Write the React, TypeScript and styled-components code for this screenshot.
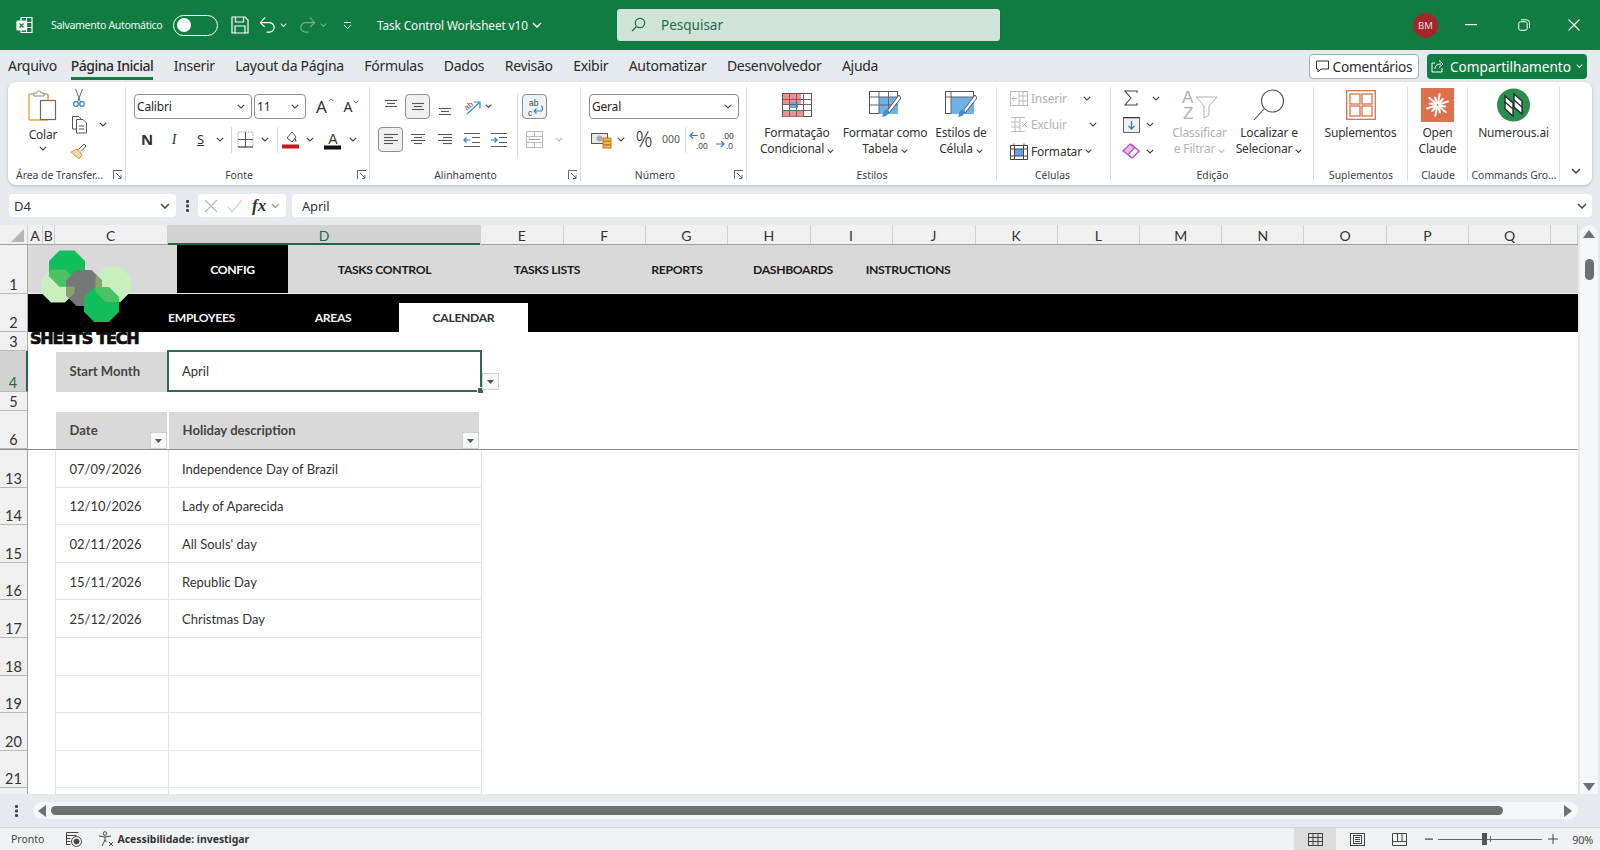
import React from "react";
import styled, { createGlobalStyle } from "styled-components";

const UI = `"Noto Sans", "Open Sans", sans-serif`;
const CELL = `Lato, "Noto Sans", sans-serif`;

const Global = createGlobalStyle`
  html, body { margin: 0; padding: 0; background: #e6e9ee; }
  * { box-sizing: border-box; }
`;

const Page = styled.div`
  width: 1600px; height: 850px; overflow: hidden; display: flex; flex-direction: column;
  background: #e6e9ee; font-family: ${UI}; color: #262626;
`;

/* ---------- title bar ---------- */
const TitleBar = styled.header`
  height: 50px; flex: none; background: #107c41; display: flex; align-items: center; color: #fff; position: relative;
`;
const TitleSlot = styled.div<{ $w: number; $ml?: number }>`
  width: ${p => p.$w}px; margin-left: ${p => p.$ml ?? 0}px; flex: none; display: flex; align-items: center; justify-content: center;
`;
const AutoSave = styled.span`
  font-size: 10.6px; margin-left: 17px; width: 122px; white-space: nowrap; letter-spacing: -0.35px; color: #eef6f1;
`;
const Toggle = styled.div`
  width: 45px; height: 21px; border: 1.4px solid #fff; border-radius: 11px; padding: 3px; flex: none; display: flex; align-items: center;
`;
const ToggleKnob = styled.div`
  width: 14px; height: 14px; border-radius: 50%; background: #fff;
`;
const DocTitle = styled.span`
  font-size: 11.8px; margin-left: 25px; width: 147px; white-space: nowrap; letter-spacing: -0.1px; color: #f3f9f6;
`;
const SearchBox = styled.div`
  width: 383px; height: 32px; margin-left: 75px; margin-top: -1px; background: #cfe3d8; border-radius: 3px; display: flex; align-items: center;
  padding-left: 14px; gap: 15px; font-size: 13.5px; color: #2a6a4a; flex: none; box-shadow: 0 0 1px rgba(0,0,0,.3);
`;
const Avatar = styled.div`
  width: 25px; height: 25px; margin-left: 413px; border-radius: 50%; background: #a4262c; color: #f1dcdc; font-size: 9.5px;
  display: flex; align-items: center; justify-content: center; flex: none;
`;

/* ---------- tabs ---------- */
const TabRow = styled.nav`
  height: 32px; flex: none; display: flex; align-items: center; padding: 0 13px 0 8px; gap: 20.5px; font-size: 14px;
`;
const Tab = styled.span<{ $active?: boolean }>`
  height: 26px; margin-top: 2px; line-height: 24px; white-space: nowrap; color: #2b2b2b; flex: none;
  letter-spacing: ${p => (p.$active ? "-0.5px" : "-0.3px")};
  margin-left: ${p => (p.$active ? "-6.5px" : "0")};
  border-bottom: 3px solid ${p => (p.$active ? "#107c41" : "transparent")};
  font-weight: ${p => (p.$active ? 500 : 400)};
`;
const TabActions = styled.div`
  margin-left: auto; display: flex; gap: 8px; align-items: center;
`;
const CommentBtn = styled.button`
  width: 110px; height: 25px; background: #fff; border: 1px solid #a9acb0; border-radius: 4px; font: 13.6px ${UI}; color: #2b2b2b;
  display: flex; align-items: center; justify-content: center; gap: 4px; padding: 0; letter-spacing: -0.2px;
`;
const ShareBtn = styled.button`
  width: 160px; height: 25px; background: #107c41; border: none; border-radius: 4px; font: 13.6px ${UI}; color: #fff;
  display: flex; align-items: center; justify-content: center; gap: 5px; padding: 0; letter-spacing: 0;
`;

/* ---------- ribbon ---------- */
const Ribbon = styled.section`
  height: 103px; flex: none; margin: 0 8px; background: #fff; border-radius: 8px; display: flex; box-shadow: 0 1px 3px rgba(0,0,0,.22);
`;
const Group = styled.div<{ $w: number }>`
  width: ${p => p.$w}px; flex: none; display: flex; flex-direction: column; position: relative;
  &::after { content: ""; position: absolute; right: 0; top: 5px; bottom: 4px; width: 1px; background: #dcdcdc; }
`;
const GroupBody = styled.div<{ $pt?: number; $pl?: number }>`
  flex: 1; display: flex; padding: ${p => p.$pt ?? 0}px 0 0 ${p => p.$pl ?? 0}px; min-height: 0;
`;
const GroupFoot = styled.div<{ $pr?: number; $pl?: number }>`
  height: 19px; flex: none; font-size: 10.4px; color: #3c3c3c; display: flex; align-items: center;
  justify-content: ${p => (p.$pl ? "flex-start" : "center")};
  padding-right: ${p => p.$pr ?? 0}px; padding-left: ${p => p.$pl ?? 0}px;
  position: relative; white-space: nowrap; margin-bottom: 0; padding-bottom: 1px;
`;
const Launcher = styled.span<{ $r: number }>`
  position: absolute; right: ${p => p.$r}px; top: 4px; display: flex;
`;
const Column = styled.div<{ $w?: number; $ml?: number }>`
  display: flex; flex-direction: column; flex: none;
  ${p => p.$w && `width:${p.$w}px;`} margin-left: ${p => p.$ml ?? 0}px;
`;
const ToolRow = styled.div<{ $mt?: number; $gap?: number }>`
  height: 25px; display: flex; align-items: center; margin-top: ${p => p.$mt ?? 0}px; gap: ${p => p.$gap ?? 0}px;
`;
const Slot = styled.div<{ $w: number; $boxed?: boolean; $tint?: boolean; $ml?: number }>`
  width: ${p => p.$w}px; height: 25px; flex: none; display: flex; align-items: center; justify-content: center; margin-left: ${p => p.$ml ?? 0}px;
  ${p => p.$boxed && `background:${p.$tint ? "#eef3f7" : "#f0f0f0"};border:1px solid #8e8e8e;border-radius:4px;`}
`;
const Combo = styled.div<{ $w: number; $ml?: number }>`
  width: ${p => p.$w}px; margin-left: ${p => p.$ml ?? 0}px; height: 25px; flex: none; border: 1px solid #8f8f8f; border-radius: 4px; font: 12px ${UI}; letter-spacing: -0.2px;
  display: flex; align-items: center; justify-content: space-between; padding: 0 6px 0 2px;
`;
const RowSep = styled.div`
  width: 1px; height: 26px; background: #d8d8d8; flex: none;
`;
const TallSep = styled.div`
  width: 1px; height: 64px; background: #d8d8d8; flex: none; margin-left: 0;
`;
const GlyphBtn = styled.span<{ $size?: number; $weight?: number; $italic?: boolean; $underline?: boolean; $color?: string; $family?: string }>`
  font: ${p => (p.$italic ? "italic" : "normal")} ${p => p.$weight ?? 400} ${p => p.$size ?? 14}px ${p => p.$family ?? UI};
  color: ${p => p.$color ?? "#333"}; text-decoration: ${p => (p.$underline ? "underline" : "none")}; line-height: 1; white-space: nowrap;
`;
const SizeBtn = styled.span<{ $size: number }>`
  display: inline-flex; align-items: flex-start; gap: 1px; font: ${p => p.$size}px ${UI}; color: #333; line-height: 1;
`;
const BigBtn = styled.div<{ $w: number; $dim?: boolean; $ml?: number }>`
  width: ${p => p.$w}px; flex: none; margin-left: ${p => p.$ml ?? 0}px; display: flex; flex-direction: column; align-items: center; padding-top: 6px;
  font-size: 12px; line-height: 16px; letter-spacing: -0.18px; color: ${p => (p.$dim ? "#b0b0b0" : "#333")}; text-align: center; white-space: nowrap;
`;
const BigIcon = styled.div`
  height: 34px; margin-bottom: 3px; display: flex; align-items: center; justify-content: center;
`;
const PasteLabel = styled.span`
  margin-top: 2px; margin-bottom: 3px;
`;
const SmallStack = styled.div<{ $w: number; $ml?: number }>`
  width: ${p => p.$w}px; flex: none; margin-left: ${p => p.$ml ?? 0}px; padding-top: 3px; display: flex; flex-direction: column;
`;
const SmallRow = styled.div<{ $dim?: boolean }>`
  height: 26.5px; display: flex; align-items: center; font-size: 12px; letter-spacing: -0.18px; color: ${p => (p.$dim ? "#b0b0b0" : "#333")}; white-space: nowrap;
`;
const SmallIcon = styled.span<{ $w?: number }>`
  width: ${p => p.$w ?? 18}px; flex: none; display: flex; justify-content: center; align-items: center;
`;
const SmallChev = styled.span<{ $ml: number }>`
  margin-left: ${p => p.$ml}px; display: flex; flex: none;
`;
const Collapse = styled.div`
  flex: 1; display: flex; align-items: flex-end; justify-content: center; padding-bottom: 11px;
`;

/* ---------- formula bar ---------- */
const FormulaBar = styled.div`
  height: 23px; flex: none; margin: 9px 8px 8px 9px; display: flex; align-items: stretch; font-size: 13px;
`;
const NameBox = styled.div`
  width: 167px; background: #fff; border-radius: 4px; display: flex; align-items: center; justify-content: space-between; padding: 0 6px 0 5px; color: #333;
`;
const Dots = styled.div`
  width: 22px; display: flex; align-items: center; justify-content: center;
`;
const FxBox = styled.div`
  width: 88px; background: #fff; border-radius: 4px; display: flex; align-items: center; padding-left: 6px; gap: 9px;
`;
const FxText = styled.span`
  font: italic 600 17px "Liberation Serif", serif; color: #333; margin-right: -4px;
`;
const FormulaInput = styled.div`
  flex: 1; margin-left: 6px; background: #fff; border-radius: 4px; display: flex; align-items: center; justify-content: space-between; padding: 0 5px 0 10px; color: #333; letter-spacing: -0.2px;
`;

/* ---------- sheet ---------- */
const Main = styled.div`
  flex: 1; min-height: 0; display: flex;
`;
const Sheet = styled.div`
  width: 1578px; flex: none; background: #fff; overflow: hidden; position: relative; display: flex; flex-direction: column;
`;
const ColHeaders = styled.div`
  height: 20px; flex: none; display: flex; background: #f0f0f0; border-bottom: 1px solid #9f9f9f;
`;
const Corner = styled.div`
  width: 28px; flex: none; display: flex; align-items: flex-end; justify-content: flex-end; padding: 0 3px 2px 0; border-right: 1px solid #d0d0d0;
`;
const ColHead = styled.div<{ $w: number; $on?: boolean }>`
  width: ${p => p.$w}px; flex: ${p => (p.$w ? "none" : 1)}; font: 14px ${CELL}; display: flex; align-items: center; justify-content: center;
  border-right: 1px solid #cfcfcf; padding-top: 1px;
  color: ${p => (p.$on ? "#1e6b43" : "#333")}; background: ${p => (p.$on ? "#d2d2d2" : "transparent")};
  ${p => p.$on && "box-shadow: inset 0 -2px 0 #1e6b43; height: 20px;"}
`;
const Row = styled.div<{ $h: number; $line?: boolean }>`
  height: ${p => p.$h}px; flex: none; display: flex; ${p => p.$line && "border-bottom: 1px solid #8d8d8d;"}
`;
const RowHead = styled.div<{ $on?: boolean }>`
  width: 28px; flex: none; font: 14.5px ${CELL}; display: flex; align-items: flex-end; justify-content: center; line-height: 16px;
  background: ${p => (p.$on ? "#d2d2d2" : "#f0f0f0")}; color: ${p => (p.$on ? "#1e6b43" : "#333")};
  border-bottom: 1px solid #b9b9b9; border-right: ${p => (p.$on ? "2px solid #1e6b43" : "1px solid #a8a8a8")};
`;
const NavBar = styled.div`
  flex: 1; background: #d9d9d9; padding-left: 149px; display: flex; border-bottom: 1px solid #efefef;
`;
const NavTab = styled.div<{ $w: number; $on?: boolean }>`
  width: ${p => p.$w}px; flex: none; display: flex; align-items: center; justify-content: center; padding-top: 2px;
  font: 700 12.2px ${CELL}; letter-spacing: -0.35px; color: ${p => (p.$on ? "#fff" : "#1c1c1c")}; background: ${p => (p.$on ? "#000" : "transparent")}; white-space: nowrap;
`;
const SubBar = styled.div`
  flex: 1; background: #000; padding-left: 108px; display: flex; align-items: flex-end;
`;
const SubTab = styled.div<{ $w: number; $on?: boolean }>`
  width: ${p => p.$w}px; height: 29px; flex: none; display: flex; align-items: center; justify-content: center; padding-bottom: 1px;
  font: 700 12.2px ${CELL}; letter-spacing: -0.35px; color: ${p => (p.$on ? "#333" : "#f2f2f2")}; background: ${p => (p.$on ? "#fff" : "transparent")};
`;
const LogoMark = styled.svg`
  position: absolute; left: 38px; top: 23px; width: 96px; height: 76px; z-index: 2;
`;
const Brand = styled.div`
  position: relative; z-index: 2; margin: -1px 0 0 2px; font: 900 16px "DejaVu Sans", sans-serif; color: #0c0c0c; letter-spacing: -1.2px; -webkit-text-stroke: 0.7px #0c0c0c; line-height: 15px; white-space: nowrap;
`;
const SheetBody = styled.div<{ $pl?: number }>`
  flex: 1; display: flex; padding-left: ${p => p.$pl ?? 0}px;
`;
const LabelCell = styled.div<{ $w: number; $ml?: number }>`
  width: ${p => p.$w}px; margin-left: ${p => p.$ml ?? 0}px; flex: none; background: #d9d9d9; display: flex; align-items: center; padding: 0 0 2px 13.5px;
  font: 700 13.1px ${CELL}; color: #454545; position: relative; margin-top: 1px;
`;
const ActiveCell = styled.div`
  width: 315px; flex: none; margin-left: 0; border: 2px solid #2c6b50; display: flex; align-items: center; padding: 0 0 1px 13px;
  font: 13px ${CELL}; color: #333; position: relative; margin-top: -1px; height: 42px;
`;
const FillHandle = styled.span`
  position: absolute; right: -3px; bottom: -3px; width: 5px; height: 5px; background: #2c6b50; border: 1px solid #fff; box-sizing: content-box; margin: -1px;
`;
const DropBtn = styled.div<{ $right: number; $bottom: number }>`
  position: absolute; right: ${p => p.$right}px; bottom: ${p => p.$bottom}px; width: 17px; height: 17px; background: #f6f8f9; border: 1px solid #cfcfcf; display: flex; align-items: center; justify-content: center;
`;
const DataCell = styled.div<{ $w: number; $pl: number }>`
  width: ${p => p.$w}px; flex: none; display: flex; align-items: center; padding: 1px 0 0 ${p => p.$pl}px; font: 13px ${CELL}; color: #333;
  border-left: 1px solid #e4e4e4; border-bottom: 1.5px solid #e4e4e4;
`;
const RowEnd = styled.div`
  width: 1px; background: #e4e4e4; flex: none;
`;

/* ---------- scrollbars ---------- */
const VScroll = styled.div`
  width: 18px; margin-left: 2px; flex: none; background: #f5f6f7; border-radius: 9px 9px 0 0; display: flex; flex-direction: column; align-items: center; padding-top: 5px;
`;
const VThumb = styled.div`
  width: 9px; height: 21px; margin-top: 21px; border-radius: 5px; background: #6f6f6f;
`;
const VDown = styled.div`
  margin-top: auto; padding-bottom: 3px; display: flex;
`;
const HScrollRow = styled.div`
  height: 33px; flex: none; display: flex; align-items: flex-start; padding-top: 8px;
`;
const HDots = styled.div`
  width: 33px; flex: none; height: 17px; display: flex; align-items: center; justify-content: center;
`;
const HPill = styled.div`
  width: 1545px; height: 17px; background: #f5f6f7; border-radius: 9px; display: flex; align-items: center; padding: 0 6px 0 5px;
`;
const HThumb = styled.div`
  width: 1452px; height: 9px; margin-left: 5px; background: #6f6f6f; border-radius: 5px;
`;
const HEnd = styled.span`
  margin-left: auto; display: flex;
`;

/* ---------- status bar ---------- */
const StatusBar = styled.footer`
  height: 23px; flex: none; background: #f0f1f2; border-top: 1px solid #d3d3d3; display: flex; align-items: center; padding-left: 11px; font-size: 10.5px; color: #444;
`;
const StatusIcon = styled.span<{ $ml: number }>`
  margin-left: ${p => p.$ml}px; display: flex; flex: none;
`;
const A11y = styled.span`
  font-weight: 700; margin-left: 3px; letter-spacing: -0.05px; color: #333;
`;
const ViewBtn = styled.div<{ $on?: boolean; $ml?: number }>`
  width: 42px; height: 22px; display: flex; align-items: center; justify-content: center; flex: none; margin-left: ${p => p.$ml ?? 0}px;
  background: ${p => (p.$on ? "#dcdcdc" : "transparent")};
`;
const Zoom = styled.div`
  display: flex; align-items: center; margin-left: 5px; flex: none;
`;
const ZoomTrack = styled.div`
  width: 104px; height: 1px; background: #666; margin: 0 6px 0 5px; position: relative;
`;
const ZoomKnob = styled.span`
  position: absolute; left: 44px; top: -6px; width: 5px; height: 12px; background: #555;
`;
const ZoomTick = styled.span`
  position: absolute; left: 52px; top: -3px; width: 1px; height: 6px; background: #666;
`;
const ZoomPct = styled.span`
  margin-left: 14px; font-size: 10.8px; color: #444; letter-spacing: -0.1px;
`;

/* ---------- icons ---------- */
const Chev = ({ c = "#444", w = 8 }: { c?: string; w?: number }) => (
  <svg width={w} height={w * 0.6} viewBox="0 0 10 6"><path d="M1 1l4 4 4-4" fill="none" stroke={c} strokeWidth="1.5" /></svg>
);
const ChevUp = () => (
  <svg width="6" height="4" viewBox="0 0 10 6"><path d="M1 5l4-4 4 4" fill="none" stroke="#555" strokeWidth="1.500" /></svg>
);
const LaunchIcon = () => (
  <svg width="10" height="10" viewBox="0 0 10 10" fill="none" stroke="#666"><path d="M.5 9V.5H9" /><path d="M3 3l5 5M8 5v3.500H5" /></svg>
);
const ExcelIcon = () => (
  <svg width="18" height="18" viewBox="0 0 18 18" fill="none" stroke="#fff" strokeWidth="1.2"><path d="M5 1.500h11v15H5zM10.500 1.500v15M5 6.500h11M5 11.500h11" /><rect x="1" y="5" width="9" height="9" rx="1" fill="#fff" /><path d="M3.500 7.500l4 4M7.500 7.500l-4 4" stroke="#107c41" /></svg>
);
const SaveIcon = () => (
  <svg width="18" height="18" viewBox="0 0 18 18" fill="none" stroke="#fff" strokeWidth="1.2"><path d="M1 1h13l3 3v13H1z" /><path d="M4.500 1v5h8V1M4 17v-7h10v7" /></svg>
);
const UndoIcon = () => (
  <svg width="18" height="18" viewBox="0 0 18 18" fill="none" stroke="#fff" strokeWidth="1.3"><path d="M1.500 6.500h9a5 5 0 0 1 1 10H8" /><path d="M6.500 1L1.500 6.500l4.500 4.500" /></svg>
);
const RedoIcon = () => (
  <svg width="18" height="18" viewBox="0 0 18 18" fill="none" stroke="#6fb08c" strokeWidth="1.3"><path d="M16.500 6.500h-9a5 5 0 0 0-1 10H10" /><path d="M11.500 1l5 5.500-4.500 4.500" /></svg>
);
const CustomIcon = () => (
  <svg width="9" height="9" viewBox="0 0 9 9" fill="none" stroke="#fff"><path d="M1 1.500h7" /><path d="M1 4l3.500 3.500L8 4" /></svg>
);
const SearchIcon = () => (
  <svg width="15" height="15" viewBox="0 0 15 15" fill="none" stroke="#2a6a4a" strokeWidth="1.2"><circle cx="9" cy="6" r="4.700" /><path d="M5.500 9.500L1 14" /></svg>
);
const CommentIcon = () => (
  <svg width="13" height="13" viewBox="0 0 13 13" fill="none" stroke="#333"><path d="M.5 1h12v8H5l-3 3V9H.5z" /></svg>
);
const ShareIcon = () => (
  <svg width="14" height="14" viewBox="0 0 14 14" fill="none" stroke="#fff"><path d="M4 4H1v9h10V9" /><path d="M4 10c0-4 3-5 6-5M8 1.500L12 5 8 8.500" /></svg>
);
const PasteIcon = () => (
  <svg width="30" height="32" viewBox="0 0 30 32" fill="none"><rect x="1" y="5" width="19" height="26" rx="1" stroke="#e4a252" strokeWidth="1.5" /><path d="M6 6V4h3a2 2 0 0 1 4 0h3v3H6z" fill="#fff" stroke="#8a8a8a" /><rect x="12.500" y="11.500" width="15" height="19" fill="#fff" stroke="#6a6a6a" strokeWidth="1.2" /></svg>
);
const ScissorsIcon = () => (
  <svg width="14" height="20" viewBox="0 0 14 20" fill="none"><path d="M3.500 1l5 13M10.500 1l-5 13" stroke="#666" /><circle cx="4" cy="16" r="2.300" stroke="#2f7dbd" strokeWidth="1.200" /><circle cx="10" cy="16" r="2.300" stroke="#2f7dbd" strokeWidth="1.200" /></svg>
);
const CopyIcon = () => (
  <svg width="17" height="19" viewBox="0 0 17 19" fill="none" stroke="#555"><path d="M6 14H1.500V1.500H8L10 4" /><path d="M5.500 4.500H12l3.500 3.500v10h-10z" fill="#fff" /><path d="M8 11h5M8 14h5" /></svg>
);
const BrushIcon = () => (
  <svg width="18" height="18" viewBox="0 0 18 18" fill="none"><path d="M1 10l6-3 5 6-3 4z" fill="#f3d9a8" stroke="#d9963d" /><path d="M8.500 7.500L14 2l2 2-5 5.500" stroke="#555" fill="#fff" /></svg>
);
const BordersIcon = () => (
  <svg width="17" height="17" viewBox="0 0 17 17" fill="none"><path d="M1 1h15v15H1z" stroke="#aaa" strokeDasharray="1.500 1" /><path d="M8.500 1v15M1 8.500h15" stroke="#555" /><path d="M1 16h15" stroke="#333" /></svg>
);
const FillIcon = () => (
  <svg width="18" height="19" viewBox="0 0 18 19" fill="none"><path d="M5 8l5-6 4 5-4 5z" fill="#fff" stroke="#555" /><path d="M13 8c1.500 1.500 2 3 1 3.500s-1.500-1.500-1-3.500z" fill="#555" /><rect x="0" y="14.500" width="17" height="4" fill="#c5191f" /></svg>
);
const Lines = ({ rows, c = "#555" }: { rows: [number, number, number][]; c?: string }) => (
  <svg width="18" height="18" viewBox="0 0 18 18" fill="none" stroke={c} strokeWidth="1.1">
    {rows.map((r, i) => <path key={i} d={`M${r[0]} ${r[2]}.5H${r[1]}`} />)}
  </svg>
);
const OrientIcon = () => (
  <svg width="20" height="19" viewBox="0 0 20 19" fill="none"><text x="2" y="12" fontSize="8" fill="#555" fontFamily="Liberation Sans" transform="rotate(-40 6 9)">ab</text><path d="M5 17L17 6M12 5h6v6" stroke="#2f87c9" strokeWidth="1.200" /></svg>
);
const IndentIcon = ({ inc }: { inc?: boolean }) => (
  <svg width="18" height="16" viewBox="0 0 18 16" fill="none" stroke="#555"><path d="M1 1.500h16M1 14.500h16M9 5.500h8M9 10.500h8" /><path d={inc ? "M1 8h6M4.500 5.500L7 8l-2.500 2.500" : "M7 8H1M3.500 5.500L1 8l2.500 2.500"} stroke="#2f7dbd" strokeWidth="1.200" /></svg>
);
const WrapIcon = () => (
  <svg width="20" height="20" viewBox="0 0 20 20" fill="none"><text x="4" y="8.500" fontSize="8.500" fill="#444" fontFamily="Liberation Sans">ab</text><text x="3" y="18.500" fontSize="8.500" fill="#444" fontFamily="Liberation Sans">c</text><path d="M9 14h7c2 0 2-5 0-5M9 14l2.500-2.500M9 14l2.500 2.500" stroke="#2f87c9" strokeWidth="1.200" /></svg>
);
const MergeIcon = () => (
  <svg width="17" height="17" viewBox="0 0 17 17" fill="none" stroke="#bbb"><rect x=".5" y=".5" width="16" height="16" /><path d="M.5 5.500h16M.5 11.500h16M8.500 .5v5M8.500 11.500v5" /><path d="M3 8.500h11" stroke="#999" /></svg>
);
const CurrencyIcon = () => (
  <svg width="22" height="18" viewBox="0 0 22 18" fill="none"><rect x=".5" y="2.500" width="16" height="10" fill="#e8e8e8" stroke="#555" /><circle cx="8.500" cy="7.500" r="3" fill="#aaa" /><rect x="12" y="7" width="8" height="3" fill="#f2b84b" stroke="#c67c1b" /><rect x="12" y="10.500" width="8" height="3" fill="#f2b84b" stroke="#c67c1b" /><rect x="12" y="14" width="8" height="3" fill="#f2b84b" stroke="#c67c1b" /></svg>
);
const DecIcon = ({ inc }: { inc?: boolean }) => (
  <svg width="24" height="20" viewBox="0 0 24 20" fill="none">
    <text x={inc ? 12 : 8} y="8.500" fontSize="8.500" fontFamily="Liberation Sans" fill="#444">{inc ? "0" : ".00"}</text>
    <text x={inc ? 8 : 12} y="18.500" fontSize="8.500" fontFamily="Liberation Sans" fill="#444">{inc ? ".00" : ".0"}</text>
    <path d={inc ? "M10 5.500H2M5 2.500L2 5.500l3 3" : "M2 14h8M7 11l3 3-3 3"} stroke="#2f7dbd" strokeWidth="1.200" />
  </svg>
);
const CondIcon = () => (
  <svg width="30" height="24" viewBox="0 0 30 24"><rect x=".5" y=".5" width="29" height="23" fill="#fff" stroke="#555" /><rect x="1" y="1" width="18" height="5.500" fill="#f08d93" /><rect x="7" y="6.500" width="12" height="5" fill="#f08d93" /><rect x="1" y="6.500" width="6" height="5" fill="#f08d93" /><rect x="7" y="9" width="9" height="6" fill="#6aa9e0" /><rect x="1" y="17" width="20" height="6.500" fill="#f08d93" /><path d="M7.500 0v24M14.500 0v24M21.500 0v24M0 6.500h30M0 11.500h30M0 17.500h30" stroke="#666" fill="none" /></svg>
);
const TableIcon = () => (
  <svg width="32" height="28" viewBox="0 0 32 28" fill="none"><rect x=".5" y=".5" width="28" height="22" fill="#fff" stroke="#555" /><rect x="10" y="6" width="19" height="17" fill="#6fb0e6" /><path d="M.5 6h28M.5 14h28M10 .5v22M19.500 .5v22" stroke="#666" /><path d="M30 4L18 20l2 2L32 7z" fill="#fff" stroke="#555" /><path d="M14 22c1-4 5-4 6-2 0 3-3 6-8 6 2-1 2-2 2-4z" fill="#3f8fd2" /></svg>
);
const CellStyleIcon = () => (
  <svg width="32" height="28" viewBox="0 0 32 28" fill="none"><rect x=".5" y=".5" width="28" height="22" fill="#fff" stroke="#555" /><rect x="6" y="6" width="23" height="17" fill="#6fb0e6" /><path d="M.5 6h28M6 .5v22" stroke="#666" /><path d="M30 4L18 20l2 2L32 7z" fill="#fff" stroke="#555" /><path d="M14 22c1-4 5-4 6-2 0 3-3 6-8 6 2-1 2-2 2-4z" fill="#3f8fd2" /></svg>
);
const CellsInsertIcon = () => (
  <svg width="18" height="15" viewBox="0 0 18 15" fill="none" stroke="#bbb"><rect x=".5" y=".5" width="17" height="14" /><path d="M9 .5v14M13 .5v14M9 5h9M9 10h9" /><path d="M7 7.500H2M4 5L2 7.500 4 10" /></svg>
);
const CellsDeleteIcon = () => (
  <svg width="18" height="15" viewBox="0 0 18 15" fill="none" stroke="#bbb"><path d="M1 .5h14M1 14.500h14M5 .5v14M10 .5v14M1 5h9M1 10h9" /><path d="M12 5l5 5M17 5l-5 5" /></svg>
);
const CellsFormatIcon = () => (
  <svg width="18" height="17" viewBox="0 0 18 17" fill="none" stroke="#444"><rect x=".5" y="2.500" width="17" height="14" fill="#fff" /><rect x="4" y="6" width="10" height="7" fill="#62a5e0" stroke="none" /><path d="M4.500 2.500v14M13.500 2.500v14M.5 6h17M.5 13h17M4 .5v2M14 .5v2" /></svg>
);
const SigmaIcon = () => (
  <svg width="16" height="16" viewBox="0 0 16 16" fill="none" stroke="#444" strokeWidth="1.100"><path d="M14 3V1H2l6 7-6 7h12v-2" /></svg>
);
const FillDownIcon = () => (
  <svg width="17" height="16" viewBox="0 0 17 16" fill="none"><rect x=".5" y=".5" width="16" height="15" fill="#f0f0f0" stroke="#666" /><path d="M.5 .5h16" stroke="#333" strokeWidth="1.500" /><path d="M8.500 4v8M5.500 9l3 3 3-3" stroke="#2f7dbd" strokeWidth="1.300" /></svg>
);
const EraserIcon = () => (
  <svg width="18" height="16" viewBox="0 0 18 16" fill="none" stroke="#b650bf" strokeWidth="1.200"><path d="M1 8l7-7 9 7-7 7z" fill="#e7b9ea" /><path d="M9 1l8 7-7 7-4-3.500 7-7z" fill="#fff" /></svg>
);
const SortIcon = () => (
  <svg width="36" height="34" viewBox="0 0 36 34" fill="none"><text x="0" y="15" fontSize="17" fontFamily="Liberation Sans" fill="#b0b0b0">A</text><text x="1" y="31" fontSize="17" fontFamily="Liberation Sans" fill="#b0b0b0">Z</text><path d="M14 9h21l-8 9v9l-5 3V18z" stroke="#b0b0b0" fill="none" /></svg>
);
const FindIcon = () => (
  <svg width="32" height="32" viewBox="0 0 32 32" fill="none" stroke="#555" strokeWidth="1.100"><circle cx="19.500" cy="12" r="11" /><path d="M11 20L1 31" /></svg>
);
const AddinIcon = () => (
  <svg width="30" height="30" viewBox="0 0 30 30" fill="none" stroke="#d0734f" strokeWidth="1.300"><rect x=".7" y=".7" width="28.600" height="28.600" /><rect x="4" y="4" width="10" height="10" /><rect x="16" y="4" width="10" height="10" /><rect x="4" y="16" width="10" height="10" /><rect x="16" y="16" width="10" height="10" /></svg>
);
const ClaudeIcon = () => (
  <svg width="33" height="34" viewBox="0 0 33 34"><rect width="33" height="34" fill="#de6f4d" /><g stroke="#fff" strokeWidth="2" strokeLinecap="round">{Array.from({ length: 12 }).map((_, i) => { const a = (i * Math.PI) / 6 + 0.2; const r = i % 2 ? 11 : 8; return <line key={i} x1={16.5 + 2 * Math.cos(a)} y1={17 + 2 * Math.sin(a)} x2={16.5 + r * Math.cos(a)} y2={17 + r * Math.sin(a)} />; })}</g></svg>
);
const NumerousIcon = () => (
  <svg width="33" height="34" viewBox="0 0 33 34"><circle cx="16.500" cy="17" r="16.500" fill="#2a8c4e" /><g fill="#fff" stroke="#1d2b22" strokeWidth="1.300"><path d="M8 8l8 7v13l-8-7z" /><path d="M17 6l8 7v13l-8-7z" /><path d="M8 14l8 7M17 12l8 7" fill="none" /></g></svg>
);
const XIcon = () => (
  <svg width="14" height="14" viewBox="0 0 14 14" fill="none" stroke="#b5b5b5" strokeWidth="1.100"><path d="M1 1l12 12M13 1L1 13" /></svg>
);
const CheckIcon = () => (
  <svg width="16" height="14" viewBox="0 0 16 14" fill="none" stroke="#c2c2c2" strokeWidth="1.100"><path d="M1 8l4 5L15 1" /></svg>
);
const VDots = ({ c = "#444" }: { c?: string }) => (
  <svg width="3" height="12" viewBox="0 0 3 12" fill={c}><rect width="3" height="3" rx="1" /><rect y="4.500" width="3" height="3" rx="1" /><rect y="9" width="3" height="3" rx="1" /></svg>
);
const Tri = ({ dir, c = "#6f6f6f" }: { dir: "u" | "d" | "l" | "r"; c?: string }) => {
  const d = { u: "M0 8L6 0l6 8z", d: "M0 0l6 8 6-8z", l: "M8 0v12L0 6z", r: "M0 0v12l8-6z" }[dir];
  const s = dir === "u" || dir === "d" ? [12, 8] : [8, 12];
  return <svg width={s[0]} height={s[1]} viewBox={`0 0 ${s[0]} ${s[1]}`} fill={c}><path d={d} /></svg>;
};
const FilterArrow = () => (
  <svg width="7" height="4" viewBox="0 0 7 4" fill="#555"><path d="M0 0h7L3.500 4z" /></svg>
);
const MacroIcon = () => (
  <svg width="16" height="15" viewBox="0 0 16 15" fill="none" stroke="#444"><path d="M.5.5h12M.5 3.500h10M.5 6.500h4M.5 9.500h4M.5.5v12h4" /><circle cx="10.500" cy="9.500" r="5" /><circle cx="10.500" cy="9.500" r="2.500" fill="#444" /></svg>
);
const A11yIcon = () => (
  <svg width="16" height="16" viewBox="0 0 16 16" fill="none" stroke="#444"><circle cx="7" cy="2.500" r="1.800" /><path d="M1 5l6 1 6-1M7 6v3L4 15M7 9l1.500 2M11 11l4 4M15 11l-4 4" /></svg>
);
const GridView = () => (
  <svg width="15" height="13" viewBox="0 0 15 13" fill="none" stroke="#444"><rect x=".5" y=".5" width="14" height="12" /><path d="M5 .5v12M10 .5v12M.5 4.500h14M.5 8.500h14" /></svg>
);
const PageView = () => (
  <svg width="15" height="13" viewBox="0 0 15 13" fill="none" stroke="#444"><rect x=".5" y=".5" width="14" height="12" /><rect x="3.500" y="2.500" width="8" height="8" /><path d="M5 4.500h5M5 6.500h5M5 8.500h5" /></svg>
);
const BreakView = () => (
  <svg width="15" height="13" viewBox="0 0 15 13" fill="none" stroke="#444"><path d="M.5.5h14v12H.5zM.5 8.500h14M5.500.5v8M10 .5v8" /></svg>
);

const octa = (cx: number, cy: number, r: number) => {
  const pts: string[] = [];
  for (let i = 0; i < 8; i++) {
    const a = Math.PI / 8 + (i * Math.PI) / 4;
    pts.push(`${(cx + r * Math.cos(a)).toFixed(1)},${(cy + r * Math.sin(a)).toFixed(1)}`);
  }
  return pts.join(" ");
};
const Logo = () => {
  const tl = octa(67, 268.5, 19.5);
  const br = octa(101.5, 304.5, 19);
  const ll = octa(58, 286, 18);
  const lr = octa(113, 284.5, 19);
  const gr = octa(84, 288, 19.5);
  return (
    <LogoMark viewBox="38 248 96 76">
      <defs>
        <clipPath id="cTl"><polygon points={tl} /></clipPath>
        <clipPath id="cBr"><polygon points={br} /></clipPath>
        <clipPath id="cGr"><polygon points={gr} /></clipPath>
      </defs>
      <polygon points={ll} fill="#c8efbd" />
      <polygon points={lr} fill="#c8efbd" />
      <polygon points={gr} fill="#777777" />
      <polygon points={ll} fill="#87a565" clipPath="url(#cGr)" />
      <polygon points={lr} fill="#87a565" clipPath="url(#cGr)" />
      <polygon points={tl} fill="#12bd5b" />
      <polygon points={ll} fill="#4cc264" clipPath="url(#cTl)" />
      <polygon points={gr} fill="#777777" clipPath="url(#cTl)" />
      <polygon points={br} fill="#12bd5b" />
      <polygon points={lr} fill="#4cc264" clipPath="url(#cBr)" />
    </LogoMark>
  );
};

const COLS: [string, number][] = [
  ["A", 15], ["B", 11.5], ["C", 113.5], ["D", 313], ["E", 82.6], ["F", 82], ["G", 82.4], ["H", 82.6], ["I", 82], ["J", 83],
  ["K", 82], ["L", 82.4], ["M", 82.4], ["N", 82], ["O", 82.4], ["P", 82.4], ["Q", 82], ["", 0],
];
const DATA = [
  ["13", "07/09/2026", "Independence Day of Brazil"],
  ["14", "12/10/2026", "Lady of Aparecida"],
  ["15", "02/11/2026", "All Souls' day"],
  ["16", "15/11/2026", "Republic Day"],
  ["17", "25/12/2026", "Christmas Day"],
  ["18", "", ""], ["19", "", ""], ["20", "", ""], ["21", "", ""], ["", "", ""],
];

export default function App() {
  return (
    <Page>
      <Global />
      <TitleBar>
        <TitleSlot $w={18} $ml={16}><ExcelIcon /></TitleSlot>
        <AutoSave>Salvamento Automático</AutoSave>
        <Toggle><ToggleKnob /></Toggle>
        <TitleSlot $w={18} $ml={13}><SaveIcon /></TitleSlot>
        <TitleSlot $w={17} $ml={10}><UndoIcon /></TitleSlot>
        <TitleSlot $w={9} $ml={3}><Chev c="#d6e9de" w={7} /></TitleSlot>
        <TitleSlot $w={17} $ml={11}><RedoIcon /></TitleSlot>
        <TitleSlot $w={9} $ml={3}><Chev c="#6fb08c" w={7} /></TitleSlot>
        <TitleSlot $w={9} $ml={15}><CustomIcon /></TitleSlot>
        <DocTitle>Task Control Worksheet v10</DocTitle>
        <TitleSlot $w={10} $ml={8}><Chev c="#f3f9f6" w={10} /></TitleSlot>
        <SearchBox><SearchIcon />Pesquisar</SearchBox>
        <Avatar>BM</Avatar>
        <TitleSlot $w={12} $ml={27}><svg width="12" height="2"><rect width="12" height="1.200" fill="#fff" /></svg></TitleSlot>
        <TitleSlot $w={12} $ml={41}><svg width="12" height="12" viewBox="0 0 12 12" fill="none" stroke="#fff"><rect x=".7" y="2.700" width="8.500" height="8.600" rx="2" /><path d="M3 .8h5.500a3 3 0 0 1 3 3V9" /></svg></TitleSlot>
        <TitleSlot $w={12} $ml={38}><svg width="12" height="12" viewBox="0 0 12 12" fill="none" stroke="#fff" strokeWidth="1.100"><path d="M.5.5l11 11M11.500.5l-11 11" /></svg></TitleSlot>
      </TitleBar>

      <TabRow>
        {["Arquivo", "Página Inicial", "Inserir", "Layout da Página", "Fórmulas", "Dados", "Revisão", "Exibir", "Automatizar", "Desenvolvedor", "Ajuda"].map(t => (
          <Tab key={t} $active={t === "Página Inicial"}>{t}</Tab>
        ))}
        <TabActions>
          <CommentBtn><CommentIcon />Comentários</CommentBtn>
          <ShareBtn><ShareIcon />Compartilhamento<Chev c="#fff" w={7} /></ShareBtn>
        </TabActions>
      </TabRow>

      <Ribbon>
        <Group $w={118}>
          <GroupBody>
            <BigBtn $w={54} $ml={8}>
              <BigIcon><PasteIcon /></BigIcon>
              <PasteLabel>Colar</PasteLabel>
              <Chev />
            </BigBtn>
            <SmallStack $w={48}>
              <SmallRow><SmallIcon><ScissorsIcon /></SmallIcon></SmallRow>
              <SmallRow><SmallIcon><CopyIcon /></SmallIcon><SmallChev $ml={11}><Chev /></SmallChev></SmallRow>
              <SmallRow><SmallIcon><BrushIcon /></SmallIcon></SmallRow>
            </SmallStack>
          </GroupBody>
          <GroupFoot $pl={8}>Área de Transfer...<Launcher $r={3}><LaunchIcon /></Launcher></GroupFoot>
        </Group>

        <Group $w={244}>
          <GroupBody $pt={12} $pl={8}>
            <Column>
              <ToolRow>
                <Combo $w={118}>Calibri<Chev /></Combo>
                <Combo $w={52} $ml={2}>11<Chev /></Combo>
                <Slot $w={24} $ml={7}><SizeBtn $size={17}>A<ChevUp /></SizeBtn></Slot>
                <Slot $w={27} $ml={1}><SizeBtn $size={14}>A<Chev c="#555" w={6} /></SizeBtn></Slot>
              </ToolRow>
              <ToolRow $mt={8}>
                <Slot $w={26}><GlyphBtn $weight={700} $size={15}>N</GlyphBtn></Slot>
                <Slot $w={28}><GlyphBtn $italic $size={14} $family={`"Liberation Serif", serif`}>I</GlyphBtn></Slot>
                <Slot $w={25}><GlyphBtn $underline $size={13}>S</GlyphBtn></Slot>
                <Slot $w={14}><Chev /></Slot>
                <Slot $w={8}><RowSep /></Slot>
                <Slot $w={20}><BordersIcon /></Slot>
                <Slot $w={20}><Chev /></Slot>
                <Slot $w={4}><RowSep /></Slot>
                <Slot $w={24}><FillIcon /></Slot>
                <Slot $w={14}><Chev /></Slot>
                <Slot $w={32}><svg width="18" height="20" viewBox="0 0 18 20"><text x="9" y="13.500" textAnchor="middle" fontSize="14" fontFamily="Liberation Sans" fill="#333">A</text><rect y="15.500" width="17" height="4" fill="#111" /></svg></Slot>
                <Slot $w={8}><Chev /></Slot>
              </ToolRow>
            </Column>
          </GroupBody>
          <GroupFoot $pr={18}>Fonte<Launcher $r={3}><LaunchIcon /></Launcher></GroupFoot>
        </Group>

        <Group $w={211}>
          <GroupBody $pt={12} $pl={8}>
            <Column $w={139}>
              <ToolRow $gap={2}>
                <Slot $w={25}><Lines rows={[[3, 15, 2], [5, 13, 5], [3, 15, 8]]} /></Slot>
                <Slot $w={25} $boxed><Lines rows={[[3, 15, 5], [5, 13, 8], [3, 15, 11]]} /></Slot>
                <Slot $w={25}><Lines rows={[[3, 15, 10], [5, 13, 13], [3, 15, 16]]} /></Slot>
                <Slot $w={25}><OrientIcon /></Slot>
                <Slot $w={8} $ml={-2}><Chev w={7} /></Slot>
              </ToolRow>
              <ToolRow $mt={8} $gap={2}>
                <Slot $w={25} $boxed><Lines rows={[[2, 16, 3], [2, 11, 6], [2, 16, 9], [2, 11, 12]]} /></Slot>
                <Slot $w={25}><Lines rows={[[2, 16, 3], [5, 13, 6], [2, 16, 9], [5, 13, 12]]} /></Slot>
                <Slot $w={25}><Lines rows={[[2, 16, 3], [7, 16, 6], [2, 16, 9], [7, 16, 12]]} /></Slot>
                <Slot $w={25}><IndentIcon /></Slot>
                <Slot $w={25}><IndentIcon inc /></Slot>
              </ToolRow>
            </Column>
            <TallSep />
            <Column $ml={4}>
              <ToolRow><Slot $w={25} $boxed $tint><WrapIcon /></Slot></ToolRow>
              <ToolRow $mt={8}><Slot $w={25}><MergeIcon /></Slot><Slot $w={24}><Chev c="#bbb" /></Slot></ToolRow>
            </Column>
          </GroupBody>
          <GroupFoot $pr={20}>Alinhamento<Launcher $r={3}><LaunchIcon /></Launcher></GroupFoot>
        </Group>

        <Group $w={166}>
          <GroupBody $pt={12} $pl={8}>
            <Column>
              <ToolRow><Combo $w={150}>Geral<Chev /></Combo></ToolRow>
              <ToolRow $mt={8}>
                <Slot $w={25}><CurrencyIcon /></Slot>
                <Slot $w={14}><Chev /></Slot>
                <Slot $w={32}><GlyphBtn $size={21} $weight={300}>%</GlyphBtn></Slot>
                <Slot $w={22}><GlyphBtn $size={10.5} $color="#555">000</GlyphBtn></Slot>
                <Slot $w={6}><RowSep /></Slot>
                <Slot $w={24}><DecIcon inc /></Slot>
                <Slot $w={28}><DecIcon /></Slot>
              </ToolRow>
            </Column>
          </GroupBody>
          <GroupFoot $pr={18}>Número<Launcher $r={3}><LaunchIcon /></Launcher></GroupFoot>
        </Group>

        <Group $w={250}>
          <GroupBody $pl={5}>
            <BigBtn $w={90}><BigIcon><CondIcon /></BigIcon><span>Formatação</span><span>Condicional <Chev w={7} /></span></BigBtn>
            <BigBtn $w={86}><BigIcon><TableIcon /></BigIcon><span>Formatar como</span><span>Tabela <Chev w={7} /></span></BigBtn>
            <BigBtn $w={66}><BigIcon><CellStyleIcon /></BigIcon><span>Estilos de</span><span>Célula <Chev w={7} /></span></BigBtn>
          </GroupBody>
          <GroupFoot>Estilos</GroupFoot>
        </Group>

        <Group $w={114}>
          <GroupBody>
            <SmallStack $w={100} $ml={13}>
              <SmallRow $dim><SmallIcon><CellsInsertIcon /></SmallIcon>&nbsp;Inserir<SmallChev $ml={16}><Chev /></SmallChev></SmallRow>
              <SmallRow $dim><SmallIcon><CellsDeleteIcon /></SmallIcon>&nbsp;Excluir<SmallChev $ml={22}><Chev /></SmallChev></SmallRow>
              <SmallRow><SmallIcon><CellsFormatIcon /></SmallIcon>&nbsp;Formatar<SmallChev $ml={3}><Chev w={7} /></SmallChev></SmallRow>
            </SmallStack>
          </GroupBody>
          <GroupFoot $pr={3}>Células</GroupFoot>
        </Group>

        <Group $w={203}>
          <GroupBody $pl={11}>
            <SmallStack $w={43}>
              <SmallRow><SmallIcon><SigmaIcon /></SmallIcon><SmallChev $ml={12}><Chev /></SmallChev></SmallRow>
              <SmallRow><SmallIcon><FillDownIcon /></SmallIcon><SmallChev $ml={6}><Chev /></SmallChev></SmallRow>
              <SmallRow><SmallIcon><EraserIcon /></SmallIcon><SmallChev $ml={6}><Chev /></SmallChev></SmallRow>
            </SmallStack>
            <BigBtn $w={69} $dim><BigIcon><SortIcon /></BigIcon><span>Classificar</span><span>e Filtrar <Chev c="#bbb" w={7} /></span></BigBtn>
            <BigBtn $w={70}><BigIcon><FindIcon /></BigIcon><span>Localizar e</span><span>Selecionar <Chev w={7} /></span></BigBtn>
          </GroupBody>
          <GroupFoot>Edição</GroupFoot>
        </Group>

        <Group $w={94}>
          <GroupBody><BigBtn $w={93}><BigIcon><AddinIcon /></BigIcon><span>Suplementos</span></BigBtn></GroupBody>
          <GroupFoot>Suplementos</GroupFoot>
        </Group>
        <Group $w={60}>
          <GroupBody><BigBtn $w={59}><BigIcon><ClaudeIcon /></BigIcon><span>Open</span><span>Claude</span></BigBtn></GroupBody>
          <GroupFoot>Claude</GroupFoot>
        </Group>
        <Group $w={92}>
          <GroupBody><BigBtn $w={91}><BigIcon><NumerousIcon /></BigIcon><span>Numerous.ai</span></BigBtn></GroupBody>
          <GroupFoot>Commands Gro...</GroupFoot>
        </Group>
        <Collapse><Chev c="#444" w={10} /></Collapse>
      </Ribbon>

      <FormulaBar>
        <NameBox>D4<Chev c="#444" w={10} /></NameBox>
        <Dots><VDots /></Dots>
        <FxBox><XIcon /><CheckIcon /><FxText>fx</FxText><Chev c="#999" w={9} /></FxBox>
        <FormulaInput>April<Chev c="#444" w={10} /></FormulaInput>
      </FormulaBar>

      <Main>
        <Sheet>
          <ColHeaders>
            <Corner><svg width="13" height="13" viewBox="0 0 13 13" fill="#b5b5b5"><path d="M13 0v13H0z" /></svg></Corner>
            {COLS.map(([n, w]) => <ColHead key={n || "end"} $w={w} $on={n === "D"}>{n}</ColHead>)}
          </ColHeaders>
          <Logo />
          <Row $h={48.5}>
            <RowHead>1</RowHead>
            <NavBar>
              <NavTab $w={111} $on>CONFIG</NavTab>
              <NavTab $w={193}>TASKS CONTROL</NavTab>
              <NavTab $w={132}>TASKS LISTS</NavTab>
              <NavTab $w={128}>REPORTS</NavTab>
              <NavTab $w={104}>DASHBOARDS</NavTab>
              <NavTab $w={126}>INSTRUCTIONS</NavTab>
            </NavBar>
          </Row>
          <Row $h={38.5}>
            <RowHead>2</RowHead>
            <SubBar>
              <SubTab $w={131}>EMPLOYEES</SubTab>
              <SubTab $w={132}>AREAS</SubTab>
              <SubTab $w={129} $on>CALENDAR</SubTab>
            </SubBar>
          </Row>
          <Row $h={19}>
            <RowHead>3</RowHead>
            <SheetBody><Brand>SHEETS TECH</Brand></SheetBody>
          </Row>
          <Row $h={41}>
            <RowHead $on>4</RowHead>
            <SheetBody $pl={28}>
              <LabelCell $w={111}>Start Month</LabelCell>
              <ActiveCell>
                April
                <FillHandle />
                <DropBtn $right={-19} $bottom={0}><FilterArrow /></DropBtn>
              </ActiveCell>
            </SheetBody>
          </Row>
          <Row $h={19}><RowHead>5</RowHead></Row>
          <Row $h={39} $line>
            <RowHead>6</RowHead>
            <SheetBody $pl={28}>
              <LabelCell $w={111}>
                Date
                <DropBtn $right={0} $bottom={0}><FilterArrow /></DropBtn>
              </LabelCell>
              <LabelCell $w={310} $ml={2}>
                Holiday description
                <DropBtn $right={0} $bottom={0}><FilterArrow /></DropBtn>
              </LabelCell>
            </SheetBody>
          </Row>
          {DATA.map(([n, d, h], i) => (
            <Row key={i} $h={37.6}>
              <RowHead>{n}</RowHead>
              <SheetBody $pl={26.5}>
                <DataCell $w={113.5} $pl={14}>{d}</DataCell>
                <DataCell $w={312.5} $pl={13}>{h}</DataCell>
                <RowEnd />
              </SheetBody>
            </Row>
          ))}
        </Sheet>
        <VScroll>
          <Tri dir="u" />
          <VThumb />
          <VDown><Tri dir="d" /></VDown>
        </VScroll>
      </Main>

      <HScrollRow>
        <HDots><VDots /></HDots>
        <HPill>
          <Tri dir="l" />
          <HThumb />
          <HEnd><Tri dir="r" /></HEnd>
        </HPill>
      </HScrollRow>

      <StatusBar>
        <span>Pronto</span>
        <StatusIcon $ml={22}><MacroIcon /></StatusIcon>
        <StatusIcon $ml={16}><A11yIcon /></StatusIcon>
        <A11y>Acessibilidade: investigar</A11y>
        <ViewBtn $on $ml={1045}><GridView /></ViewBtn>
        <ViewBtn><PageView /></ViewBtn>
        <ViewBtn><BreakView /></ViewBtn>
        <Zoom>
          <svg width="8" height="8"><rect y="3.500" width="8" height="1.200" fill="#444" /></svg>
          <ZoomTrack><ZoomKnob /><ZoomTick /></ZoomTrack>
          <svg width="10" height="10" fill="#444"><rect y="4.500" width="10" height="1" /><rect x="4.500" width="1" height="10" /></svg>
          <ZoomPct>90%</ZoomPct>
        </Zoom>
      </StatusBar>
    </Page>
  );
}
